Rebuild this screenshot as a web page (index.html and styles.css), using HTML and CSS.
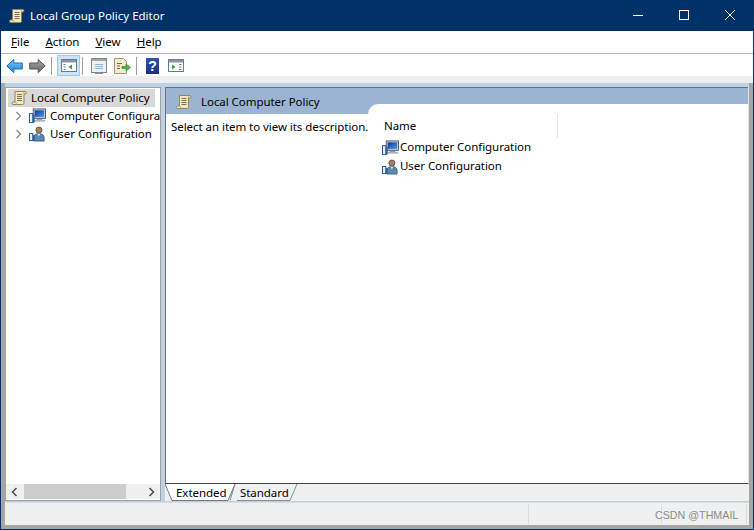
FILE: index.html
```html
<!DOCTYPE html>
<html lang="en">
<head>
<meta charset="UTF-8">
<meta name="viewport" content="width=device-width, initial-scale=1.0">
<title>Local Group Policy Editor</title>
<link rel="stylesheet" href="styles.css">
</head>
<body>

<svg class="defs" width="0" height="0">
  <defs>
    <linearGradient id="blueArrow" x1="0" y1="0" x2="0" y2="1">
      <stop offset="0" stop-color="#7cc8f4"/>
      <stop offset="1" stop-color="#1f86d8"/>
    </linearGradient>
    <linearGradient id="grayArrow" x1="0" y1="0" x2="0" y2="1">
      <stop offset="0" stop-color="#a8a8a8"/>
      <stop offset="1" stop-color="#666"/>
    </linearGradient>
    <linearGradient id="screen" x1="0" y1="0" x2="1" y2="1">
      <stop offset="0" stop-color="#0c2f9c"/>
      <stop offset="1" stop-color="#4aa0f0"/>
    </linearGradient>
  </defs>
  <symbol id="scroll" viewBox="0 0 16 16">
    <path d="M3.500 1.500h10.500c1.200 0 1.200 2.500 0 2.500h-1.500v9c0 1-.5 1.500-1.500 1.500H1.500c-1.200 0-1.200-2.500 0-2.500h2z" fill="#f5e8bd" stroke="#8f8461"/>
    <path d="M12.500 4c0-1-.3-2.500-1-2.500M3.500 12c1 0 1.500 1 1.500 2.500" fill="none" stroke="#b0a47c"/>
    <path d="M5.500 4.500h5M5.500 6.500h5M5.500 8.500h5M5.500 10.500h5" stroke="#7a7254"/>
  </symbol>
  <symbol id="computer" viewBox="0 0 18 16">
    <rect x="4.500" y=".5" width="13" height="10" fill="#c6ccd6" stroke="#4f5d72"/>
    <rect x="6" y="2" width="10" height="7" fill="url(#screen)"/>
    <rect x="8" y="10.500" width="6" height="1.500" fill="#6d7a8c"/>
    <rect x="5" y="12" width="12" height="2" fill="#a9b3c0"/>
    <rect x=".5" y="5.500" width="3.500" height="9.500" fill="#e6edf5" stroke="#24508c"/>
    <rect x="4" y="6.500" width="2" height="8.500" fill="#2f5f9c"/>
  </symbol>
  <symbol id="user" viewBox="0 0 18 16">
    <circle cx="10.500" cy="3.800" r="3.200" fill="#a9805c" stroke="#4f4036" stroke-width=".8"/>
    <path d="M5 15.500v-4c0-2.500 2.500-4 5.500-4s5.500 1.500 5.500 4v4z" fill="#5f88b0" stroke="#33506e" stroke-width=".8"/>
    <path d="M9 7.800l1.500 2.500 1.500-2.500z" fill="#e8eef4"/>
    <rect x=".5" y="7.500" width="3.500" height="7.500" fill="#e6edf5" stroke="#24508c"/>
    <rect x="4" y="9" width="2" height="6" fill="#2f5f9c"/>
  </symbol>
</svg>

<div class="window">
  <div class="titlebar">
    <svg class="title-icon"><use href="#scroll"/></svg>
    <span class="title-text">Local Group Policy Editor</span>
    <div class="caption-btns">
      <svg class="caption-btn" viewBox="0 0 46 30"><path d="M18 15.500h10" stroke="#fff"/></svg>
      <svg class="caption-btn" viewBox="0 0 46 30"><rect x="18.500" y="10.500" width="9" height="9" fill="none" stroke="#fff"/></svg>
      <svg class="caption-btn" viewBox="0 0 46 30"><path d="M18 10l10 10M28 10L18 20" stroke="#fff"/></svg>
    </div>
  </div>

  <div class="menubar">
    <span class="menu-item"><u>F</u>ile</span>
    <span class="menu-item"><u>A</u>ction</span>
    <span class="menu-item"><u>V</u>iew</span>
    <span class="menu-item"><u>H</u>elp</span>
  </div>

  <div class="toolbar">
    <svg class="tool-arrow" viewBox="0 0 17 16"><path d="M.8 8l7-6.500V5h8.500v6H7.800v3.500z" fill="url(#blueArrow)" stroke="#1a6cb0"/></svg>
    <svg class="tool-arrow" viewBox="0 0 17 16"><path d="M16.200 8l-7-6.500V5H.7v6h8.500v3.500z" fill="url(#grayArrow)" stroke="#555"/></svg>
    <span class="tool-sep"></span>
    <span class="tool-active">
      <svg class="tool" viewBox="0 0 16 16"><rect x=".5" y="1.500" width="15" height="12" fill="#fff" stroke="#707a86"/><rect x="1" y="2" width="14" height="2.500" fill="#8a96a4"/><path d="M11 6.500v5L7.500 9z" fill="#2f9e44"/><path d="M2.500 6.500h2M2.500 9h2M2.500 11.500h2" stroke="#5080b0"/></svg>
    </span>
    <span class="tool-sep"></span>
    <svg class="tool tool-list" viewBox="0 0 16 16"><rect x=".5" y=".5" width="15" height="14" fill="#f0f0f0" stroke="#808890"/><rect x="1" y="1" width="14" height="2" fill="#a0a8b0"/><path d="M4 6.500h8M4 8.500h8M4 10.500h8" stroke="#8fb8dc"/><path d="M4 15.500h8" stroke="#3ea2e8"/></svg>
    <svg class="tool tool-export" viewBox="0 0 17 16"><path d="M.5 .5h9l3 3v12H.5z" fill="#f6eccb" stroke="#a09878"/><path d="M3 5.500h5M3 8h3M3 10.500h3" stroke="#666"/><path d="M8 8.500h4V6l4.500 3.500L12 13v-2.500H8z" fill="#4cb84c" stroke="#2f8a2f" stroke-width=".7"/></svg>
    <span class="tool-sep tool-sep-wide"></span>
    <span class="tool-help">?</span>
    <svg class="tool tool-action" viewBox="0 0 16 16"><rect x=".5" y="1.500" width="15" height="12" fill="#fff" stroke="#707a86"/><rect x="1" y="2" width="14" height="2.500" fill="#8a96a4"/><path d="M4 6.500v5L7.500 9z" fill="#2f9e44"/><path d="M11 6.500h2.500M11 9h2.500M11 11.500h2.500" stroke="#5080b0"/></svg>
  </div>

  <div class="body-strip"></div>

  <div class="panes">
    <div class="tree-pane">
      <div class="tree">
        <div class="tree-row tree-root">
          <svg class="tree-icon"><use href="#scroll"/></svg>
          <span>Local Computer Policy</span>
        </div>
        <div class="tree-row">
          <svg class="chevron" viewBox="0 0 8 10"><path d="M1.500 1l4 4-4 4" fill="none" stroke="#8a8a8a" stroke-width="1.400"/></svg>
          <svg class="tree-icon"><use href="#computer"/></svg>
          <span class="tree-label">Computer Configuration</span>
        </div>
        <div class="tree-row">
          <svg class="chevron" viewBox="0 0 8 10"><path d="M1.500 1l4 4-4 4" fill="none" stroke="#8a8a8a" stroke-width="1.400"/></svg>
          <svg class="tree-icon"><use href="#user"/></svg>
          <span class="tree-label">User Configuration</span>
        </div>
      </div>
      <div class="hscroll">
        <svg class="scroll-arrow" viewBox="0 0 8 10"><path d="M5.500 1l-4 4 4 4" fill="none" stroke="#444" stroke-width="1.500"/></svg>
        <div class="scroll-track"><div class="scroll-thumb"></div></div>
        <svg class="scroll-arrow" viewBox="0 0 8 10"><path d="M2.500 1l4 4-4 4" fill="none" stroke="#444" stroke-width="1.500"/></svg>
      </div>
    </div>

    <div class="detail-col">
      <div class="detail-pane">
        <div class="detail-header">
          <svg class="detail-icon"><use href="#scroll"/></svg>
          <span>Local Computer Policy</span>
        </div>
        <div class="detail-body">
          <div class="description">Select an item to view its description.</div>
          <div class="list">
            <div class="list-head"><span class="col-name">Name</span></div>
            <div class="list-row"><svg class="tree-icon"><use href="#computer"/></svg><span>Computer Configuration</span></div>
            <div class="list-row"><svg class="tree-icon"><use href="#user"/></svg><span>User Configuration</span></div>
          </div>
        </div>
      </div>
      <div class="tabs">
        <svg class="tab-shapes" viewBox="0 0 140 17">
          <path d="M65 16.500L70 0M72 16.500h53L132 0" fill="#f0f0f0" stroke="#8c8c8c"/>
          <path d="M0 0l7 16.500h56L70 0z" fill="#fff"/>
          <path d="M0 0l7 16.500h56L70 0" fill="none" stroke="#777"/>
        </svg>
        <span class="tab tab-extended">Extended</span>
        <span class="tab">Standard</span>
      </div>
    </div>
  </div>

  <div class="statusbar">
    <span class="status-cell status-main"></span>
    <span class="status-cell status-mid"></span>
    <span class="status-cell status-end">CSDN @THMAIL</span>
  </div>
</div>

</body>
</html>
```

FILE: styles.css
```css
body {
  margin: 0;
  width: 754px;
  height: 530px;
  overflow: hidden;
  font-family: "Noto Sans", "Open Sans", sans-serif;
  font-size: 11.5px;
  color: #000;
  background-color: #003168;
}
.defs {
  display: block;
  height: 0;
}
.window {
  height: 529px;
  margin: 0 1px;
  padding-bottom: 4px;
  box-sizing: border-box;
  display: flex;
  flex-direction: column;
  background-color: #a6a6a6;
}
.titlebar {
  height: 31px;
  flex: none;
  display: flex;
  align-items: center;
  background-color: #003168;
  color: #fff;
  padding-left: 8px;
}
.title-icon {
  width: 16px;
  height: 16px;
  margin-right: 5px;
}
.caption-btns {
  margin-left: auto;
  display: flex;
  align-self: flex-start;
}
.caption-btn {
  width: 46px;
  height: 30px;
}
.menubar {
  height: 21px;
  flex: none;
  display: flex;
  align-items: center;
  gap: 16px;
  padding: 0 0 1px 10px;
  background-color: #fff;
  border-bottom: 1px solid #b4b4bd;
}
.toolbar {
  height: 22px;
  flex: none;
  display: flex;
  align-items: center;
  padding: 1px 0 0 2px;
  box-sizing: border-box;
  background-color: #fff;
}
.tool {
  width: 16px;
  height: 16px;
  flex: none;
}
.tool-arrow {
  width: 17px;
  height: 16px;
  margin: 0 3px;
  flex: none;
}
.tool-list {
  margin-left: 6px;
}
.tool-export {
  width: 17px;
  margin-left: 7px;
}
.tool-action {
  margin-left: 9px;
}
.tool-sep {
  width: 1px;
  height: 18px;
  margin: 0 2px;
  flex: none;
  background-color: #a0a0a0;
}
.tool-sep-wide {
  margin-left: 5px;
}
.tool-active {
  width: 23px;
  height: 21px;
  display: flex;
  align-items: center;
  background-color: #cce4f7;
  border: 1px solid #99ccf0;
  box-sizing: border-box;
  margin-left: 3px;
  padding-left: 3px;
}
.tool-help {
  width: 13px;
  height: 16px;
  margin-left: 7px;
  background: linear-gradient(to bottom, #2f55b8, #1a2f80);
  color: #fff;
  font-family: "Liberation Sans", sans-serif;
  font-weight: bold;
  font-size: 14px;
  line-height: 16px;
  text-align: center;
}
.body-strip {
  height: 7px;
  flex: none;
  background-color: #eeeeee;
}
.panes {
  flex: 1;
  display: flex;
  gap: 4px;
  margin: 0 4px;
  padding: 4px 0 1px;
  background-color: #bcd2e8;
  min-height: 0;
  letter-spacing: -0.05px;
}
.tree-pane {
  width: 156px;
  display: flex;
  flex-direction: column;
  background-color: #fff;
  border: 1px solid #a0a0a0;
  box-sizing: border-box;
}
.tree {
  flex: 1;
  padding-top: 1px;
  overflow: hidden;
}
.tree-row {
  height: 18px;
  display: flex;
  align-items: center;
  padding-left: 9px;
  white-space: nowrap;
}
.tree-row span,
.list-row span,
.list-head span,
.detail-header span {
  margin-bottom: 2px;
}
.tree-root {
  background-color: #d9d9d9;
  margin: 0 5px 0 2px;
  padding-left: 3px;
}
.tree-root .tree-icon {
  margin-right: 3px;
}
.chevron {
  width: 8px;
  height: 10px;
  margin-right: 6px;
  flex: none;
}
.tree-icon {
  width: 17px;
  height: 16px;
  margin-right: 4px;
  flex: none;
}
.hscroll {
  height: 15px;
  flex: none;
  margin-bottom: 1px;
  display: flex;
  align-items: center;
  background-color: #f0f0f0;
}
.scroll-arrow {
  width: 18px;
  height: 10px;
  flex: none;
}
.scroll-track {
  flex: 1;
  height: 15px;
}
.scroll-thumb {
  width: 102px;
  height: 15px;
  background-color: #cdcdcd;
}
.detail-col {
  flex: 1;
  display: flex;
  flex-direction: column;
  min-width: 0;
  background-color: #f0f0f0;
}
.detail-pane {
  flex: 1;
  display: flex;
  flex-direction: column;
  background-color: #fff;
  border-left: 1px solid #707070;
  border-right: 1px solid #e0e0e0;
  border-bottom: 1px solid #444;
  box-sizing: border-box;
}
.detail-header {
  height: 27px;
  flex: none;
  display: flex;
  align-items: center;
  padding: 2px 0 0 10px;
  background-color: #9ab4d2;
  border-top: 1px solid #707070;
  box-sizing: border-box;
}
.detail-icon {
  width: 16px;
  height: 16px;
  margin-right: 9px;
}
.detail-body {
  flex: 1;
  display: flex;
}
.description {
  width: 202px;
  flex: none;
  padding: 5px 0 0 5px;
  box-sizing: border-box;
  white-space: nowrap;
}
.list {
  flex: 1;
  margin-top: -10px;
  background-color: #fff;
  border-top-left-radius: 10px;
  padding-top: 10px;
}
.list-head {
  height: 24px;
  width: 190px;
  display: flex;
  align-items: center;
  padding-left: 16px;
  box-sizing: border-box;
  border-right: 1px solid #e5e5e5;
}
.list-row {
  height: 19px;
  display: flex;
  align-items: center;
  padding-left: 14px;
  white-space: nowrap;
}
.list-row .tree-icon {
  margin-right: 1px;
}
.tabs {
  height: 17px;
  flex: none;
  display: flex;
  position: relative;
  padding-left: 11px;
}
.tab-shapes {
  position: absolute;
  left: 0;
  top: 0;
  width: 140px;
  height: 17px;
}
.tab {
  position: relative;
  line-height: 17px;
}
.tab-extended {
  width: 64px;
}
.statusbar {
  height: 23px;
  flex: none;
  display: flex;
  box-sizing: border-box;
  background-color: #f0f0f0;
  border-top: 1px solid #dcdcdc;
  margin: 0 4px;
}
.status-cell {
  border-right: 1px solid #dcdcdc;
  box-sizing: border-box;
  margin: 1px 0;
}
.status-main {
  width: 524px;
}
.status-mid {
  width: 133px;
}
.status-end {
  width: 92px;
  margin-left: -7px;
  color: #8c8c8c;
  font-family: "Liberation Sans", Arial, sans-serif;
  font-size: 10.7px;
  line-height: 22px;
  white-space: nowrap;
}
```
